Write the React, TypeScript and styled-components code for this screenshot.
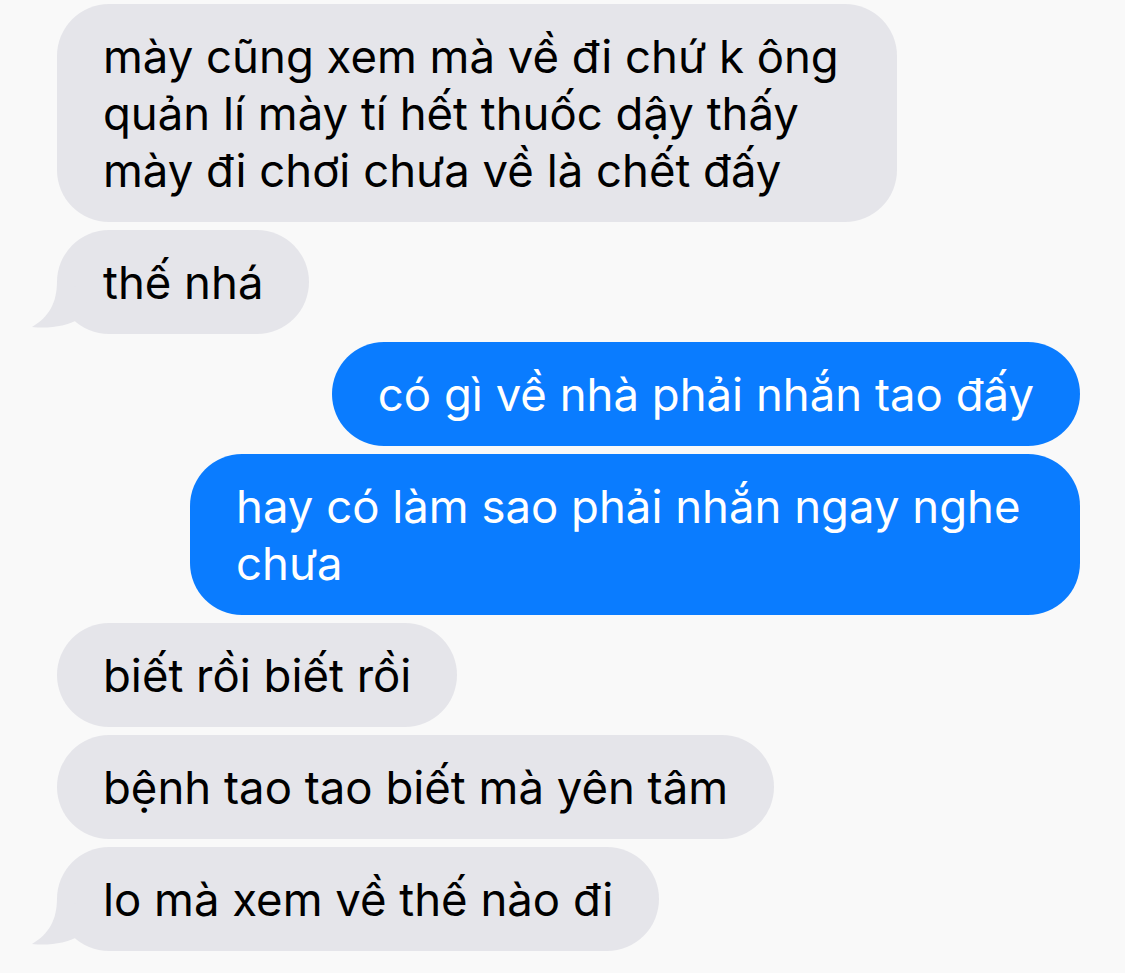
import React from 'react'
import styled, { createGlobalStyle } from 'styled-components'

const GlobalStyle = createGlobalStyle`
  body {
    margin: 0;
    background: #f9f9f9;
    font-family: Inter, "Noto Sans", sans-serif;
  }
`

const Thread = styled.div`
  display: flex;
  flex-direction: column;
  gap: 8px;
  padding: 4px 45px 20px 57px;
  width: 1125px;
  box-sizing: border-box;
`

const Row = styled.div<{ $mine?: boolean }>`
  display: flex;
  justify-content: ${p => (p.$mine ? 'flex-end' : 'flex-start')};
`

const Bubble = styled.div<{ $mine?: boolean; $width?: number }>`
  position: relative;
  box-sizing: border-box;
  width: ${p => (p.$width ? `${p.$width}px` : 'auto')};
  padding: 24px 46px 23px 46px;
  border-radius: 52px;
  background: ${p => (p.$mine ? '#0a7cff' : '#e5e5ea')};
  color: ${p => (p.$mine ? '#ffffff' : '#000000')};
  font-size: 45.5px;
  line-height: 57px;
  white-space: nowrap;
`

const Tail = styled.svg`
  position: absolute;
  left: -26px;
  bottom: 3px;
  width: 60px;
  height: 50px;
`

const TailShape = () => (
  <Tail viewBox="0 0 60 50">
    <path d="M26 0 C26 22 18 36 1 46 C18 48 36 45 48 38 L60 10 Z" fill="#e5e5ea" />
  </Tail>
)

const App: React.FC = () => {
  return (
    <>
      <GlobalStyle />
      <Thread>
        <Row>
          <Bubble $width={840}>
            mày cũng xem mà về đi chứ k ông<br />
            quản lí mày tí hết thuốc dậy thấy<br />
            mày đi chơi chưa về là chết đấy
          </Bubble>
        </Row>
        <Row>
          <Bubble>
            <TailShape />
            thế nhá
          </Bubble>
        </Row>
        <Row $mine>
          <Bubble $mine>có gì về nhà phải nhắn tao đấy</Bubble>
        </Row>
        <Row $mine>
          <Bubble $mine $width={890}>
            hay có làm sao phải nhắn ngay nghe<br />
            chưa
          </Bubble>
        </Row>
        <Row>
          <Bubble>biết rồi biết rồi</Bubble>
        </Row>
        <Row>
          <Bubble>bệnh tao tao biết mà yên tâm</Bubble>
        </Row>
        <Row>
          <Bubble>
            <TailShape />
            lo mà xem về thế nào đi
          </Bubble>
        </Row>
      </Thread>
    </>
  )
}

export default App
